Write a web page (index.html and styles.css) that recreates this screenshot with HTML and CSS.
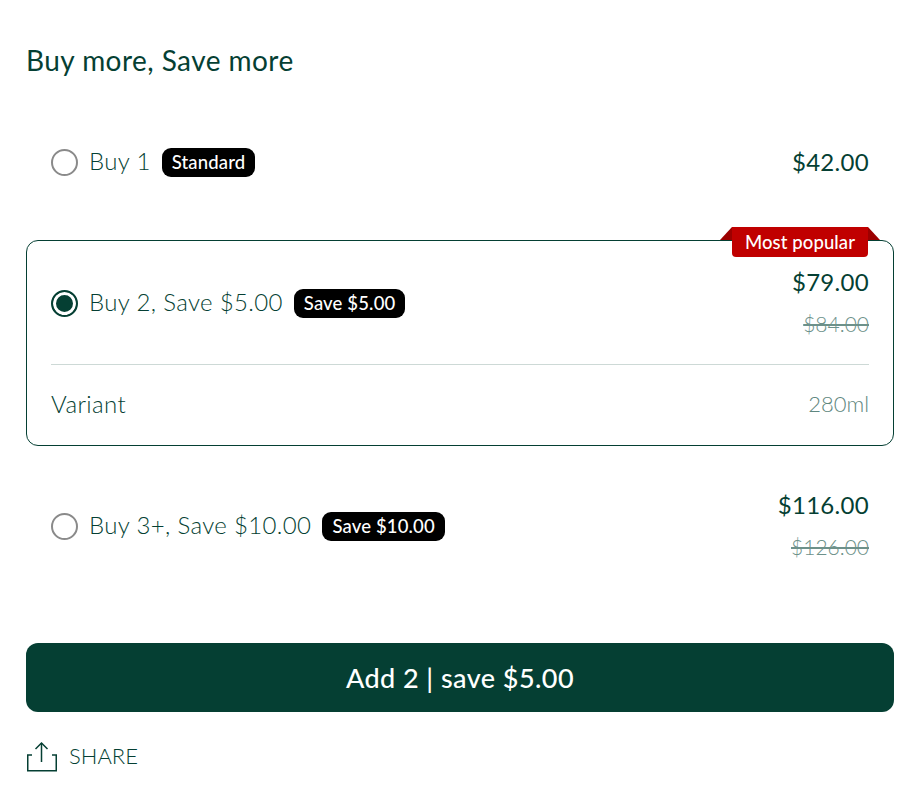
FILE: index.html
```html
<!DOCTYPE html>
<html lang="en">
<head>
    <meta charset="UTF-8">
    <meta name="viewport" content="width=device-width, initial-scale=1.0">
    <title>Buy more, Save more</title>
    <link rel="stylesheet" href="styles.css">
</head>
<body>
    <main class="bundle">
        <h2 class="bundle-title">Buy more, Save more</h2>

        <div class="options">
            <label class="option option-first">
                <div class="option-row">
                    <input type="radio" name="qty" class="radio">
                    <span class="option-name">Buy 1</span>
                    <span class="tag">Standard</span>
                    <div class="prices">
                        <div class="price">$42.00</div>
                    </div>
                </div>
            </label>

            <label class="option selected">
                <div class="ribbon">Most popular</div>
                <div class="option-row">
                    <input type="radio" name="qty" class="radio" checked>
                    <span class="option-name">Buy 2, Save $5.00</span>
                    <span class="tag">Save $5.00</span>
                    <div class="prices">
                        <div class="price">$79.00</div>
                        <div class="price-old">$84.00</div>
                    </div>
                </div>
                <div class="variant">
                    <span class="variant-label">Variant</span>
                    <span class="variant-value">280ml</span>
                </div>
            </label>

            <label class="option">
                <div class="option-row">
                    <input type="radio" name="qty" class="radio">
                    <span class="option-name">Buy 3+, Save $10.00</span>
                    <span class="tag">Save $10.00</span>
                    <div class="prices">
                        <div class="price">$116.00</div>
                        <div class="price-old">$126.00</div>
                    </div>
                </div>
            </label>
        </div>

        <button class="add-button">Add 2 | save $5.00</button>

        <a class="share" href="#">
            <svg class="share-icon" width="32" height="32" viewBox="0 0 32 32" fill="none" stroke="#053f33" stroke-width="1.5">
                <path d="M15.5 21V2"/>
                <path d="M9.5 8L15.5 2l6 6"/>
                <path d="M6 14H1.75v15.75h28.5V14H26"/>
            </svg>
            <span class="share-text">SHARE</span>
        </a>
    </main>
</body>
</html>
```

FILE: styles.css
```css
* {
    box-sizing: border-box;
}
body {
    margin: 0;
    font-family: Lato, "Open Sans", sans-serif;
    color: #053f33;
    background-color: #fff;
}
.bundle {
    padding: 44px 22px 0 26px;
}
.bundle-title {
    margin: 0 0 44px;
    font-size: 28px;
    line-height: 32px;
    font-weight: 400;
    letter-spacing: 0.45px;
}
.options {
    display: flex;
    flex-direction: column;
    gap: 17px;
}
.option {
    position: relative;
    display: block;
    border: 1px solid transparent;
    border-radius: 12px;
    cursor: pointer;
}
.option-first {
    margin-bottom: 19px;
}
.option.selected {
    border-color: #053f33;
}
.option-row {
    display: flex;
    align-items: center;
    padding: 20px 24px;
}
.selected .option-row {
    padding-bottom: 19px;
}
.radio {
    appearance: none;
    width: 27px;
    height: 27px;
    margin: 0 11px 0 0;
    flex-shrink: 0;
    border: 2px solid #8a8a8a;
    border-radius: 50%;
    background-color: #fff;
}
.radio:checked {
    border-color: #053f33;
    background-color: #053f33;
    box-shadow: inset 0 0 0 3px #fff;
}
.option-name {
    padding-bottom: 2px;
    font-size: 24px;
    font-weight: 300;
    line-height: 40px;
    letter-spacing: 0.35px;
    color: #053f33;
}
.tag {
    margin-left: 11px;
    padding: 0 10px;
    height: 29px;
    line-height: 29px;
    border-radius: 9px;
    font-size: 18.5px;
    font-weight: 500;
    letter-spacing: 0.15px;
    color: #fff;
    background-color: #000;
}
.prices {
    margin-left: auto;
    text-align: right;
}
.price {
    font-size: 24px;
    line-height: 42px;
    letter-spacing: 0.3px;
}
.price-old {
    font-size: 21px;
    font-weight: 300;
    line-height: 42px;
    color: #6d918a;
    text-decoration: line-through;
}
.ribbon {
    position: absolute;
    top: -14px;
    right: 25px;
    width: 136px;
    height: 30px;
    border-radius: 0 0 4px 4px;
    font-size: 18.5px;
    line-height: 30px;
    font-weight: 500;
    letter-spacing: 0.1px;
    text-align: center;
    color: #fff;
    background-color: #c00000;
}
.ribbon::before,
.ribbon::after {
    content: "";
    position: absolute;
    top: 0;
    width: 12px;
    height: 13px;
    background-color: #9c0000;
}
.ribbon::before {
    left: -12px;
    clip-path: polygon(100% 0, 100% 100%, 0 100%);
}
.ribbon::after {
    right: -12px;
    clip-path: polygon(0 0, 100% 100%, 0 100%);
}
.variant {
    display: flex;
    justify-content: space-between;
    align-items: center;
    margin: 0 24px;
    padding: 19px 0 21px;
    border-top: 1px solid #cdd9d6;
    line-height: 40px;
}
.variant-label {
    font-size: 24px;
    font-weight: 300;
    letter-spacing: 0.4px;
}
.variant-value {
    font-size: 22px;
    font-weight: 300;
    color: #5f8780;
}
.add-button {
    display: block;
    width: 100%;
    height: 69px;
    margin-top: 54px;
    border: none;
    border-radius: 12px;
    font-family: inherit;
    font-size: 27px;
    font-weight: 500;
    letter-spacing: 0.45px;
    color: #fff;
    background-color: #053f33;
    cursor: pointer;
}
.share {
    display: flex;
    align-items: center;
    gap: 11px;
    margin-top: 29px;
    font-size: 22px;
    font-weight: 300;
    color: #053f33;
    text-decoration: none;
}
.share-icon {
    flex-shrink: 0;
}
.share-text {
    padding-bottom: 4px;
}
```
